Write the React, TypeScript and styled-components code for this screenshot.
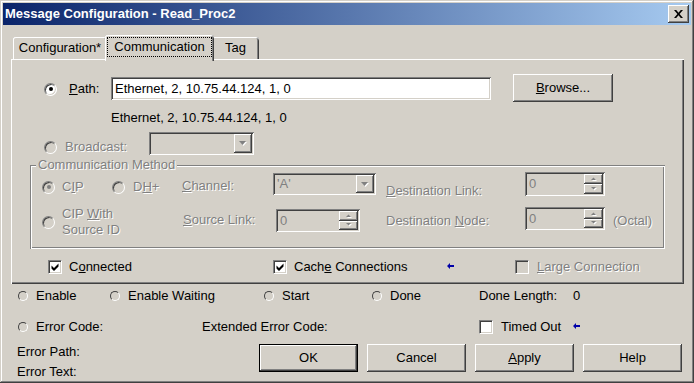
import React from "react";
import styled, { createGlobalStyle, css } from "styled-components";

const FACE = "#d4d0c8";
const SHADOW = "#808080";
const DARK = "#404040";
const LIGHT = "#ffffff";

const GlobalStyle = createGlobalStyle`
  html, body { margin: 0; padding: 0; background: ${FACE}; overflow: hidden; }
  body {
    font-family: "Liberation Sans", Arial, sans-serif;
    font-size: 13px;
    line-height: 16px;
    color: #000;
  }
  *, *::before, *::after { box-sizing: border-box; }
`;

const raisedShadow = css`
  box-shadow: inset -1px -1px 0 ${DARK}, inset 1px 1px 0 ${LIGHT},
    inset -2px -2px 0 ${SHADOW}, inset 2px 2px 0 ${FACE};
`;

const sunkenShadow = css`
  box-shadow: inset 1px 1px 0 ${SHADOW}, inset -1px -1px 0 ${LIGHT},
    inset 2px 2px 0 ${DARK}, inset -2px -2px 0 ${FACE};
`;

const disabledText = css`
  color: ${SHADOW};
  text-shadow: 1px 1px 0 ${LIGHT};
`;

const Window = styled.div`
  width: 694px;
  height: 383px;
  padding: 3px;
  background: ${FACE};
  box-shadow: inset -1px -1px 0 ${DARK}, inset 1px 1px 0 ${FACE},
    inset -2px -2px 0 ${SHADOW}, inset 2px 2px 0 ${LIGHT};
  display: flex;
  flex-direction: column;
`;

const TitleBar = styled.div`
  flex: none;
  height: 22px;
  background: linear-gradient(to right, #0a246a, #a6caf0);
  display: flex;
  align-items: center;
  justify-content: space-between;
  padding: 0 2px;
`;

const TitleText = styled.span`
  color: #fff;
  font-weight: bold;
  font-size: 13px;
  white-space: nowrap;
`;

const CloseButton = styled.div`
  width: 21px;
  height: 18px;
  background: ${FACE};
  ${raisedShadow}
  display: flex;
  align-items: center;
  justify-content: center;
`;

const TabStrip = styled.div`
  flex: none;
  display: flex;
  align-items: flex-end;
  height: 24px;
  margin: 10px 0 0 10px;
  position: relative;
  z-index: 1;
`;

const Tab = styled.div<{ $w: number; $active?: boolean }>`
  flex: none;
  width: ${(p) => p.$w}px;
  height: ${(p) => (p.$active ? 26 : 22)}px;
  margin: ${(p) => (p.$active ? "0 -2px -2px" : "0")};
  padding: ${(p) => (p.$active ? "2px 2px 0" : "3px 0 0")};
  text-align: center;
  background: ${FACE};
  border-radius: 3px 3px 0 0;
  box-shadow: inset 1px 0 0 ${LIGHT}, inset 0 1px 0 ${LIGHT},
    inset -1px 0 0 ${DARK}, inset -2px 0 0 ${SHADOW};
  position: relative;
  z-index: ${(p) => (p.$active ? 2 : 1)};
  white-space: nowrap;
`;

const FocusBox = styled.div`
  height: 20px;
  border: 1px dotted #000;
  display: flex;
  align-items: center;
  justify-content: center;
`;

const Panel = styled.div`
  flex: none;
  margin-left: 8px;
  width: 673px;
  height: 225px;
  background: ${FACE};
  box-shadow: inset 1px 1px 0 ${LIGHT}, inset -1px -1px 0 ${DARK},
    inset -2px -2px 0 ${SHADOW};
  display: flex;
  flex-direction: column;
`;

const Row = styled.div<{ $mt?: number; $h?: number; $pl?: number }>`
  flex: none;
  display: flex;
  align-items: flex-start;
  margin-top: ${(p) => p.$mt ?? 0}px;
  height: ${(p) => (p.$h ? `${p.$h}px` : "auto")};
  padding-left: ${(p) => p.$pl ?? 0}px;
`;

const Cell = styled.div<{ $w?: number; $mt?: number }>`
  flex: none;
  width: ${(p) => (p.$w ? `${p.$w}px` : "auto")};
  margin-top: ${(p) => p.$mt ?? 0}px;
  display: flex;
  align-items: center;
`;

const Label = styled.span<{ $disabled?: boolean }>`
  white-space: nowrap;
  ${(p) => p.$disabled && disabledText}
`;

const Choice = styled.div<{ $gap: number }>`
  display: flex;
  align-items: center;
  gap: ${(p) => p.$gap}px;
`;

const RadioCircle = styled.span<{ $checked?: boolean; $disabled?: boolean }>`
  flex: none;
  width: 13px;
  height: 13px;
  border-radius: 50%;
  border: 1px solid;
  border-color: ${SHADOW} ${LIGHT} ${LIGHT} ${SHADOW};
  box-shadow: inset 1px 1px 0 ${DARK}, inset -1px -1px 0 ${FACE};
  background: ${(p) => (p.$disabled ? FACE : "#fff")};
  display: flex;
  align-items: center;
  justify-content: center;
  &::after {
    content: "";
    width: 4px;
    height: 4px;
    border-radius: 50%;
    background: ${(p) => (p.$disabled ? SHADOW : "#000")};
    display: ${(p) => (p.$checked ? "block" : "none")};
  }
`;

const Led = styled.span`
  flex: none;
  width: 10px;
  height: 10px;
  border-radius: 50%;
  border: 1px solid;
  border-color: ${DARK} ${LIGHT} ${LIGHT} ${DARK};
  background: ${FACE};
`;

const CheckBox = styled.span<{ $disabled?: boolean }>`
  flex: none;
  width: 14px;
  height: 14px;
  border: 1px solid;
  border-color: ${SHADOW} ${LIGHT} ${LIGHT} ${SHADOW};
  box-shadow: inset 1px 1px 0 ${DARK}, inset -1px -1px 0 ${FACE};
  background: ${(p) => (p.$disabled ? FACE : "#fff")};
  display: flex;
  align-items: center;
  justify-content: center;
`;

const TextField = styled.input`
  width: 380px;
  height: 23px;
  border: none;
  outline: none;
  padding: 0 4px;
  margin: 0;
  font: inherit;
  color: #000;
  background: #fff;
  ${sunkenShadow}
`;

const Button = styled.div<{ $w: number; $h: number; $default?: boolean }>`
  flex: none;
  width: ${(p) => p.$w}px;
  height: ${(p) => p.$h}px;
  display: flex;
  align-items: center;
  justify-content: center;
  background: ${FACE};
  white-space: nowrap;
  ${(p) =>
    p.$default
      ? css`
          border: 1px solid #000;
          box-shadow: inset -1px -1px 0 ${DARK}, inset 1px 1px 0 ${LIGHT},
            inset -2px -2px 0 ${SHADOW};
        `
      : raisedShadow}
`;

const Combo = styled.div<{ $w: number; $h: number }>`
  flex: none;
  width: ${(p) => p.$w}px;
  height: ${(p) => p.$h}px;
  padding: 2px;
  background: ${FACE};
  ${sunkenShadow}
  display: flex;
`;

const ComboText = styled.span`
  flex: 1;
  padding-left: 2px;
  display: flex;
  align-items: center;
  ${disabledText}
  text-shadow: none;
`;

const DropButton = styled.div`
  flex: none;
  width: 18px;
  background: ${FACE};
  ${raisedShadow}
  display: flex;
  align-items: center;
  justify-content: center;
`;

const SpinButtons = styled.div`
  flex: none;
  width: 19px;
  display: flex;
  flex-direction: column;
`;

const SpinButton = styled.div`
  flex: 1;
  background: ${FACE};
  ${raisedShadow}
  display: flex;
  align-items: center;
  justify-content: center;
`;

const GroupBox = styled.div`
  flex: none;
  position: relative;
  margin: 10px 0 0 19px;
  width: 635px;
  height: 84px;
  box-shadow: inset 1px 1px 0 ${SHADOW}, inset -1px -1px 0 ${LIGHT},
    inset 2px 2px 0 ${LIGHT}, inset -2px -2px 0 ${SHADOW};
  display: flex;
  flex-direction: column;
`;

const GroupLegend = styled.span`
  position: absolute;
  top: -8px;
  left: 6px;
  padding: 0 2px;
  background: ${FACE};
  white-space: nowrap;
  ${disabledText}
`;

const Column = styled.div<{ $w: number; $gap: number }>`
  flex: none;
  width: ${(p) => p.$w}px;
  display: flex;
  flex-direction: column;
  gap: ${(p) => p.$gap}px;
`;

const ButtonBar = styled.div`
  display: flex;
  gap: 9px;
`;

const DownArrow = () => (
  <svg width="8" height="5" viewBox="0 0 8 5">
    <path d="M1 1h7L4.5 5z" fill="#fff" />
    <path d="M0 0h7L3.5 4z" fill={SHADOW} />
  </svg>
);

const SpinTri = ({ up }: { up?: boolean }) => (
  <svg width="6" height="4" viewBox="0 0 6 4">
    {up ? (
      <>
        <path d="M1 4h5L3.5 1.5z" fill="#fff" />
        <path d="M0 3h5L2.5 0.5z" fill={SHADOW} />
      </>
    ) : (
      <>
        <path d="M1 1h5L3.5 3.5z" fill="#fff" />
        <path d="M0 0h5L2.5 2.5z" fill={SHADOW} />
      </>
    )}
  </svg>
);

const CheckMark = () => (
  <svg width="8" height="8" viewBox="0 0 8 8">
    <path d="M0.5 2.5L3 5 7.5 0.5V3.5L3 8 0.5 5.5Z" fill="#000" />
  </svg>
);

const BlueArrow = () => (
  <svg width="7" height="6" viewBox="0 0 7 6">
    <path d="M0 3L3 0V2H7V4H3V6Z" fill="#0000a8" />
  </svg>
);

const CloseGlyph = () => (
  <svg width="9" height="8" viewBox="0 0 9 8">
    <path
      d="M0 0h2.2L4.5 2.8 6.8 0H9L5.6 4 9 8H6.8L4.5 5.2 2.2 8H0l3.4-4z"
      fill="#000"
    />
  </svg>
);

const Spinner = ({ w, h }: { w: number; h: number }) => (
  <Combo $w={w} $h={h}>
    <ComboText>0</ComboText>
    <SpinButtons>
      <SpinButton>
        <SpinTri up />
      </SpinButton>
      <SpinButton>
        <SpinTri />
      </SpinButton>
    </SpinButtons>
  </Combo>
);

const DropDown = ({ w, h, text }: { w: number; h: number; text?: string }) => (
  <Combo $w={w} $h={h}>
    <ComboText>{text}</ComboText>
    <DropButton>
      <DownArrow />
    </DropButton>
  </Combo>
);

const Radio = ({
  label,
  gap,
  checked,
  disabled,
}: {
  label: React.ReactNode;
  gap: number;
  checked?: boolean;
  disabled?: boolean;
}) => (
  <Choice $gap={gap}>
    <RadioCircle $checked={checked} $disabled={disabled} />
    <Label $disabled={disabled}>{label}</Label>
  </Choice>
);

const Status = ({ label }: { label: string }) => (
  <Choice $gap={8}>
    <Led />
    <Label>{label}</Label>
  </Choice>
);

const Check = ({
  label,
  gap,
  checked,
  disabled,
}: {
  label: React.ReactNode;
  gap: number;
  checked?: boolean;
  disabled?: boolean;
}) => (
  <Choice $gap={gap}>
    <CheckBox $disabled={disabled}>{checked && <CheckMark />}</CheckBox>
    <Label $disabled={disabled}>{label}</Label>
  </Choice>
);

export default function App() {
  return (
    <>
      <GlobalStyle />
      <Window>
        <TitleBar>
          <TitleText>Message Configuration - Read_Proc2</TitleText>
          <CloseButton>
            <CloseGlyph />
          </CloseButton>
        </TitleBar>

        <TabStrip>
          <Tab $w={94}>Configuration*</Tab>
          <Tab $w={109} $active>
            <FocusBox>Communication</FocusBox>
          </Tab>
          <Tab $w={47}>Tag</Tab>
        </TabStrip>

        <Panel>
          <Row $mt={15} $h={28} $pl={33}>
            <Cell $w={67} $mt={7}>
              <Radio
                gap={12}
                checked
                label={
                  <>
                    <u>P</u>ath:
                  </>
                }
              />
            </Cell>
            <Cell $w={402} $mt={3}>
              <TextField readOnly defaultValue="Ethernet, 2, 10.75.44.124, 1, 0" />
            </Cell>
            <Button $w={100} $h={28}>
              <span>
                <u>B</u>rowse...
              </span>
            </Button>
          </Row>

          <Row $mt={8} $pl={100}>
            <Label>Ethernet, 2, 10.75.44.124, 1, 0</Label>
          </Row>

          <Row $mt={6} $h={23} $pl={33}>
            <Cell $w={105} $mt={7}>
              <Radio gap={8} disabled label="Broadcast:" />
            </Cell>
            <DropDown w={105} h={23} />
          </Row>

          <GroupBox>
            <GroupLegend>Communication Method</GroupLegend>
            <Row $h={34} $pl={12}>
              <Cell $w={70} $mt={14}>
                <Radio
                  gap={7}
                  checked
                  disabled
                  label={
                    <>
                      C<u>I</u>P
                    </>
                  }
                />
              </Cell>
              <Cell $w={70} $mt={14}>
                <Radio
                  gap={8}
                  disabled
                  label={
                    <>
                      D<u>H</u>+
                    </>
                  }
                />
              </Cell>
              <Cell $w={91} $mt={13}>
                <Label $disabled>
                  <u>C</u>hannel:
                </Label>
              </Cell>
              <Cell $w={113} $mt={8}>
                <DropDown w={103} h={22} text="'A'" />
              </Cell>
              <Cell $w={139} $mt={18}>
                <Label $disabled>
                  <u>D</u>estination Link:
                </Label>
              </Cell>
              <Cell $mt={7}>
                <Spinner w={80} h={24} />
              </Cell>
            </Row>
            <Row $pl={12}>
              <Cell $w={141} $mt={7}>
                <Radio
                  gap={7}
                  disabled
                  label={
                    <>
                      CIP <u>W</u>ith
                      <br />
                      Source ID
                    </>
                  }
                />
              </Cell>
              <Cell $w={93} $mt={13}>
                <Label $disabled>
                  <u>S</u>ource Link:
                </Label>
              </Cell>
              <Cell $w={110} $mt={10}>
                <Spinner w={84} h={23} />
              </Cell>
              <Cell $w={139} $mt={14}>
                <Label $disabled>
                  Destination <u>N</u>ode:
                </Label>
              </Cell>
              <Cell $w={88} $mt={8}>
                <Spinner w={80} h={23} />
              </Cell>
              <Cell $mt={14}>
                <Label $disabled>(Octal)</Label>
              </Cell>
            </Row>
          </GroupBox>

          <Row $mt={9} $h={16} $pl={37}>
            <Cell $w={225} $mt={1}>
              <Check
                gap={7}
                checked
                label={
                  <>
                    C<u>o</u>nnected
                  </>
                }
              />
            </Cell>
            <Cell $w={174} $mt={1}>
              <Check
                gap={7}
                checked
                label={
                  <>
                    Cach<u>e</u> Connections
                  </>
                }
              />
            </Cell>
            <Cell $w={68} $mt={5}>
              <BlueArrow />
            </Cell>
            <Cell $mt={1}>
              <Check
                gap={8}
                disabled
                label={
                  <>
                    <u>L</u>arge Connection
                  </>
                }
              />
            </Cell>
          </Row>
        </Panel>

        <Row $mt={4} $h={16} $pl={15}>
          <Cell $w={92}>
            <Status label="Enable" />
          </Cell>
          <Cell $w={154}>
            <Status label="Enable Waiting" />
          </Cell>
          <Cell $w={108}>
            <Status label="Start" />
          </Cell>
          <Cell $w={107}>
            <Status label="Done" />
          </Cell>
          <Cell $w={94}>
            <Label>Done Length:</Label>
          </Cell>
          <Cell>
            <Label>0</Label>
          </Cell>
        </Row>

        <Row $mt={15} $h={16} $pl={15}>
          <Cell $w={184}>
            <Status label="Error Code:" />
          </Cell>
          <Cell $w={277}>
            <Label>Extended Error Code:</Label>
          </Cell>
          <Cell $w={94}>
            <Check gap={8} label="Timed Out" />
          </Cell>
          <Cell $mt={4}>
            <BlueArrow />
          </Cell>
        </Row>

        <Row $mt={9} $h={28} $pl={14}>
          <Column $w={242} $gap={4}>
            <Label>Error Path:</Label>
            <Label>Error Text:</Label>
          </Column>
          <ButtonBar>
            <Button $w={99} $h={28} $default>
              OK
            </Button>
            <Button $w={99} $h={28}>
              Cancel
            </Button>
            <Button $w={99} $h={28}>
              <span>
                <u>A</u>pply
              </span>
            </Button>
            <Button $w={99} $h={28}>
              Help
            </Button>
          </ButtonBar>
        </Row>
      </Window>
    </>
  );
}
